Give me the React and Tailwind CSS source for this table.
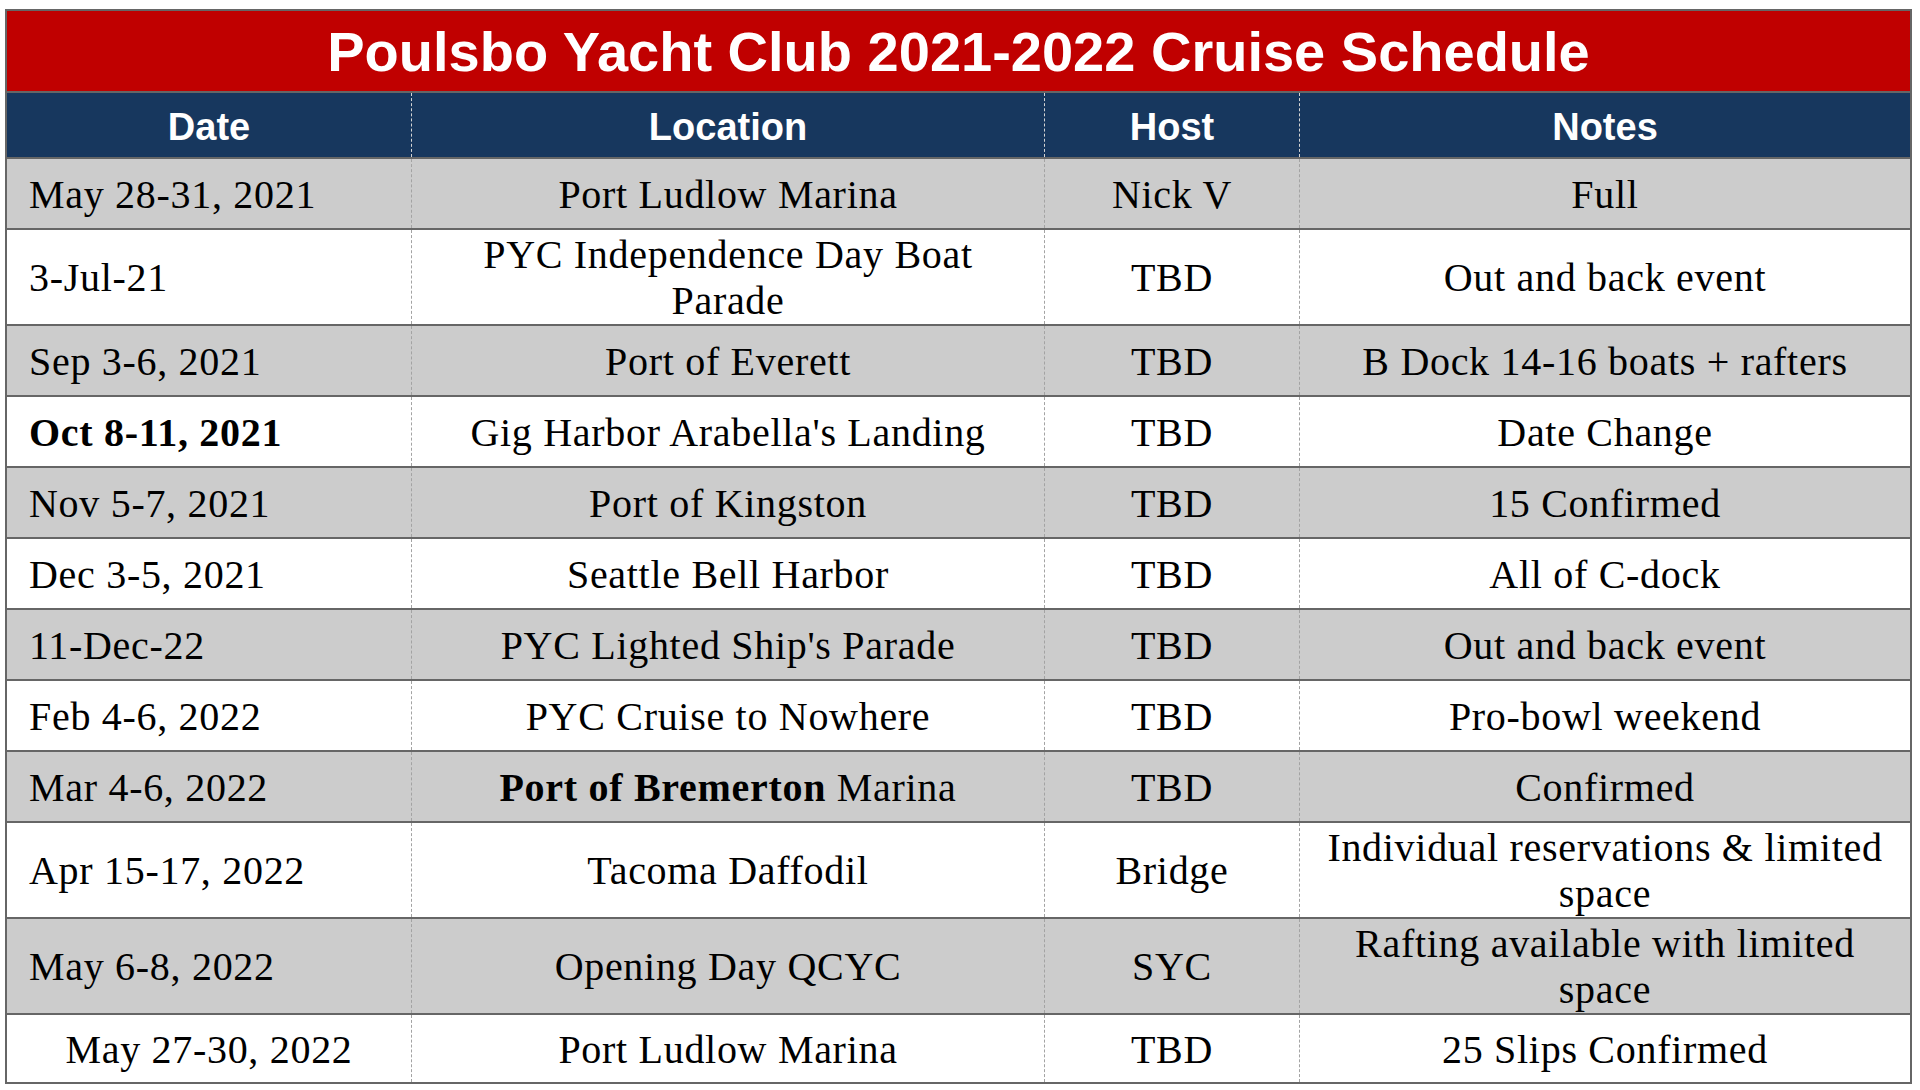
import React from 'react';

const rows = [
  { date: 'May 28-31, 2021', location: 'Port Ludlow Marina', host: 'Nick V', notes: 'Full' },
  { date: '3-Jul-21', location: ['PYC Independence Day Boat', 'Parade'], host: 'TBD', notes: 'Out and back event', tall: true },
  { date: 'Sep 3-6, 2021', location: 'Port of Everett', host: 'TBD', notes: 'B Dock 14-16 boats + rafters' },
  { date: 'Oct 8-11, 2021', boldDate: true, location: "Gig Harbor Arabella's Landing", host: 'TBD', notes: 'Date Change' },
  { date: 'Nov 5-7, 2021', location: 'Port of Kingston', host: 'TBD', notes: '15 Confirmed' },
  { date: 'Dec 3-5, 2021', location: 'Seattle Bell Harbor', host: 'TBD', notes: 'All of C-dock' },
  { date: '11-Dec-22', location: "PYC Lighted Ship's Parade", host: 'TBD', notes: 'Out and back event' },
  { date: 'Feb 4-6, 2022', location: 'PYC Cruise to Nowhere', host: 'TBD', notes: 'Pro-bowl weekend' },
  { date: 'Mar 4-6, 2022', location: 'bremerton', host: 'TBD', notes: 'Confirmed' },
  { date: 'Apr 15-17, 2022', location: 'Tacoma Daffodil', host: 'Bridge', notes: ['Individual reservations & limited', 'space'], tall: true },
  { date: 'May 6-8, 2022', location: 'Opening Day QCYC', host: 'SYC', notes: ['Rafting available with limited', 'space'], tall: true },
  { date: 'May 27-30, 2022', centerDate: true, location: 'Port Ludlow Marina', host: 'TBD', notes: '25 Slips Confirmed', last: true },
];

const Lines = ({ value }) => {
  if (value === 'bremerton') {
    return (
      <span>
        <span className="font-bold">Port of Bremerton</span> Marina
      </span>
    );
  }
  if (Array.isArray(value)) {
    return (
      <span>
        {value[0]}
        <br />
        {value[1]}
      </span>
    );
  }
  return <span>{value}</span>;
};

const cell = 'flex items-center justify-center text-center pt-[2px] border-l border-dashed border-[#a3a3a3]';

export default function App() {
  return (
    <div className="min-h-[1090px] bg-white pt-[9px] pl-[5px]">
      <div className="w-[1907px] border-2 border-[#666666] font-['Liberation_Serif',serif] text-black">
        {/* title */}
        <div className="h-[80px] pt-[2px] bg-[#c00000] flex items-center justify-center text-white font-['Liberation_Sans',Arial,sans-serif] font-bold text-[56px] leading-none">
          Poulsbo Yacht Club 2021-2022 Cruise Schedule
        </div>

        {/* column headings */}
        <div className="grid grid-cols-[404px_633px_255px_611px] h-[66px] border-t-2 border-[#666666] bg-[#17375e] text-white font-['Liberation_Sans',Arial,sans-serif] font-bold text-[38px] leading-none">
          <div className="flex items-center justify-center pt-[3px]">Date</div>
          <div className="flex items-center justify-center pt-[3px] border-l border-dashed border-[#d4d4d4]">Location</div>
          <div className="flex items-center justify-center pt-[3px] border-l border-dashed border-[#d4d4d4]">Host</div>
          <div className="flex items-center justify-center pt-[3px] border-l border-dashed border-[#d4d4d4]">Notes</div>
        </div>

        {rows.map((r, i) => (
          <div
            key={i}
            className={`grid grid-cols-[404px_633px_255px_611px] border-t-2 border-[#666666] text-[40px] leading-[46px] tracking-[0.7px] ${
              i % 2 === 0 ? 'bg-[#cccccc]' : 'bg-white'
            } ${r.tall ? 'h-[96px]' : r.last ? 'h-[69px]' : 'h-[71px]'}`}
          >
            <div
              className={`flex items-center pt-[2px] ${r.centerDate ? 'justify-center' : 'justify-start pl-[22px]'} ${
                r.boldDate ? 'font-bold' : ''
              }`}
            >
              {r.date}
            </div>
            <div className={cell}>
              <Lines value={r.location} />
            </div>
            <div className={cell}>
              <Lines value={r.host} />
            </div>
            <div className={cell}>
              <Lines value={r.notes} />
            </div>
          </div>
        ))}
      </div>
    </div>
  );
}
